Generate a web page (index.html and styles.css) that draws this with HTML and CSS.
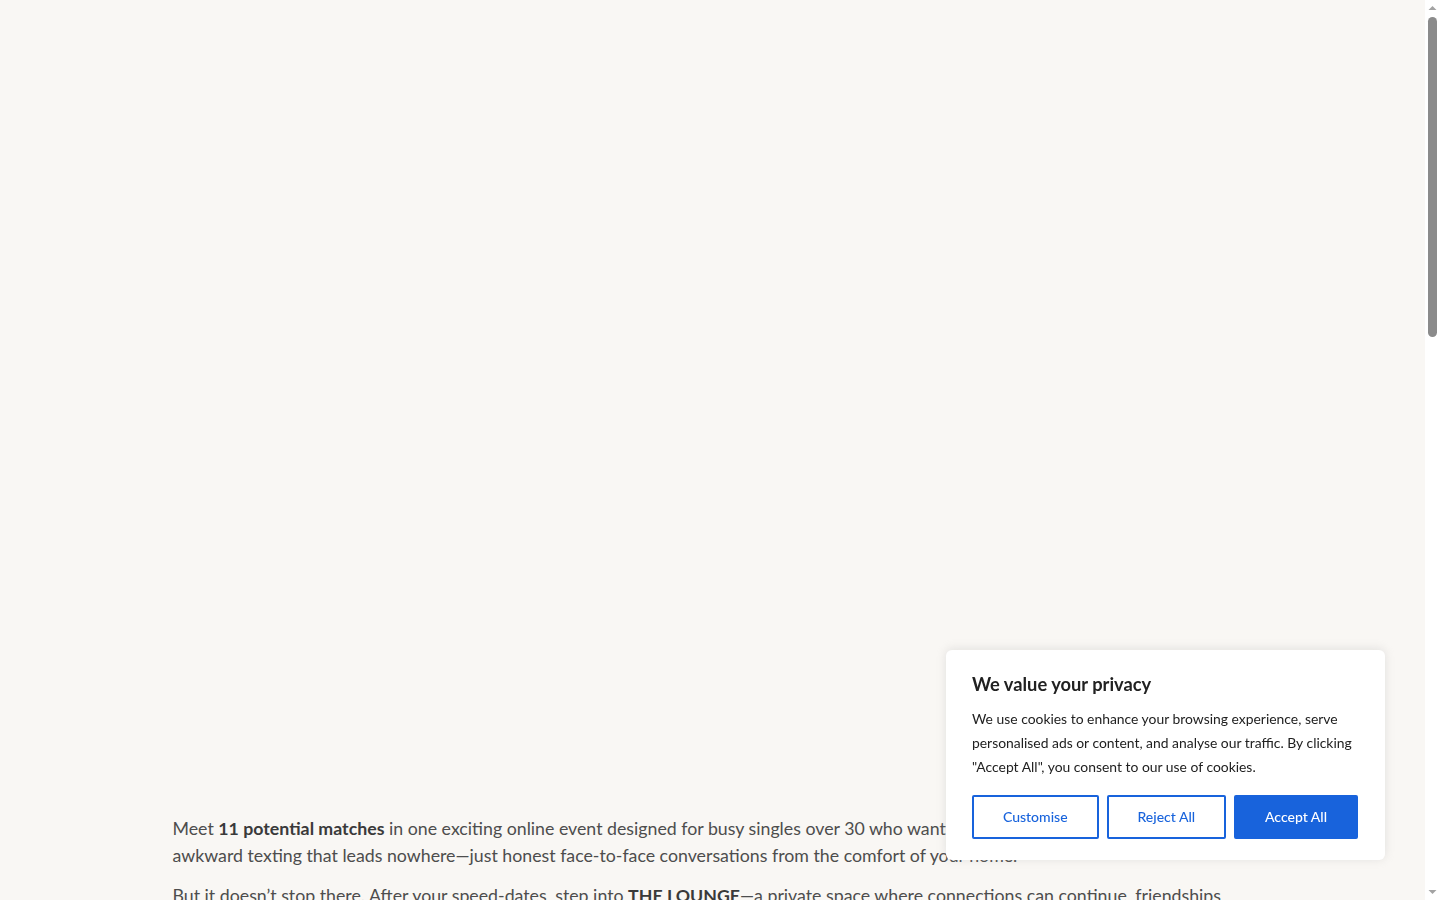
FILE: index.html
```html
<!DOCTYPE html>
<html lang="en">
<head>
<meta charset="utf-8">
<title>Online Speed Dating</title>
<link rel="stylesheet" href="styles.css">
</head>
<body>
<main class="page">
  <div class="hero"></div>
  <section class="content">
    <p>Meet <strong>11 potential matches</strong> in one exciting online event designed for busy singles over 30 who want real connections. No swiping, no awkward texting that leads nowhere—just honest face-to-face conversations from the comfort of your home.</p>
    <p>But it doesn’t stop there. After your speed-dates, step into <strong>THE LOUNGE</strong>—a private space where connections can continue, friendships can grow, and you can chat freely with everyone you met during the evening.</p>
    <p>Our experienced hosts guide you through every step of the night, making sure each conversation feels relaxed, natural and fun. All you need is a laptop or phone, a good internet connection and a smile.</p>
    <p>After the event, simply tell us who you’d like to see again. If the feeling is mutual, we’ll share contact details so you can take things further at your own pace.</p>
  </section>
  <div class="filler"></div>
</main>

<div class="scrollbar" aria-hidden="true">
  <svg class="sb-arrow" width="15" height="15" viewBox="0 0 15 15"><polygon points="3.5,10 11.5,10 7.5,6" fill="#a3a3a3"/></svg>
  <div class="sb-track"><div class="sb-thumb"></div></div>
  <svg class="sb-arrow" width="15" height="15" viewBox="0 0 15 15"><polygon points="3.5,5 11.5,5 7.5,9" fill="#a3a3a3"/></svg>
</div>

<div class="cookie">
  <p class="cookie-title">We value your privacy</p>
  <p class="cookie-text">We use cookies to enhance your browsing experience, serve personalised ads or content, and analyse our traffic. By clicking "Accept All", you consent to our use of cookies.</p>
  <div class="cookie-actions">
    <button class="btn btn-outline">Customise</button>
    <button class="btn btn-outline">Reject All</button>
    <button class="btn btn-solid">Accept All</button>
  </div>
</div>
</body>
</html>
```
FILE: styles.css
```css
html, body {
  margin: 0;
  padding: 0;
}
body {
  background: #f9f7f4;
  font-family: Lato, "Open Sans", sans-serif;
  color: #4d4d4d;
}
.page {
  display: flex;
  flex-direction: column;
  margin-right: 15px;
}
.hero {
  height: 815px;
}
.content {
  width: 1080px;
  margin: 0 auto;
}
.content p {
  margin: 0 0 13px;
  font-size: 17.75px;
  line-height: 27px;
}
.content strong {
  color: #3a3a3a;
  font-weight: 700;
}
.filler {
  height: 1300px;
}

/* classic browser scrollbar */
.scrollbar {
  position: fixed;
  top: 0;
  right: 0;
  width: 15px;
  height: 100vh;
  background: #ffffff;
  display: flex;
  flex-direction: column;
}
.sb-arrow {
  display: block;
  flex: none;
}
.sb-track {
  flex: 1;
  padding: 2px 3px;
}
.sb-thumb {
  height: 320px;
  background: #8b8b8b;
  border-radius: 5px;
}

.cookie {
  position: fixed;
  right: 55px;
  bottom: 40px;
  width: 439px;
  box-sizing: border-box;
  padding: 22px 27px 21px 26px;
  background: #ffffff;
  border-radius: 6px;
  box-shadow: 0 -1px 10px 0 rgba(172, 171, 171, 0.3);
  color: #212121;
}
.cookie-title {
  margin: 0 0 11px;
  font-size: 18.3px;
  font-weight: 700;
  line-height: 24px;
}
.cookie-text {
  margin: 0;
  font-size: 13.9px;
  line-height: 24px;
  color: #212121;
}
.cookie-actions {
  display: flex;
  gap: 8px;
  margin-top: 16px;
}
.btn {
  flex: auto;
  font-family: inherit;
  font-size: 14px;
  line-height: 24px;
  font-weight: 500;
  padding: 8px;
  border: 2px solid #1863dc;
  border-radius: 2px;
  cursor: pointer;
}
.btn-outline {
  background: transparent;
  color: #1863dc;
}
.btn-solid {
  background: #1863dc;
  color: #ffffff;
}
```
